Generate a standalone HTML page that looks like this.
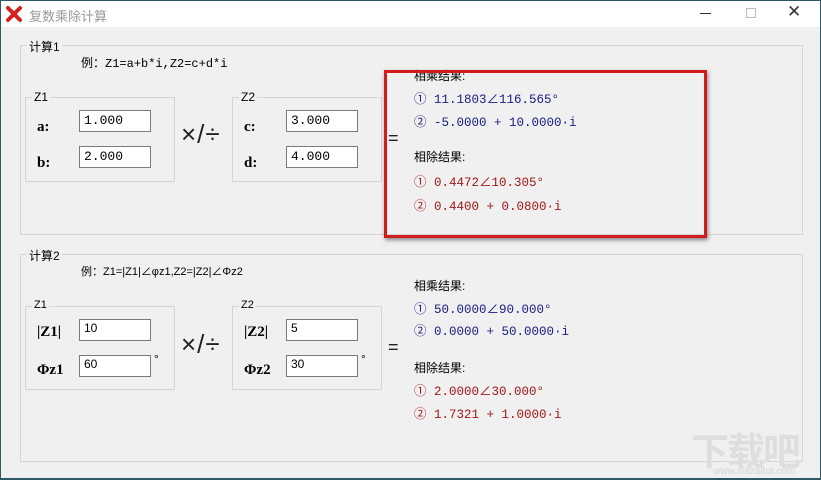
<!DOCTYPE html>
<html><head><meta charset="utf-8"><style>
*{margin:0;padding:0;box-sizing:border-box}
body{width:821px;height:480px;background:#2f5866;position:relative;overflow:hidden;font-family:"Liberation Mono","Noto Sans CJK SC",monospace;font-size:12px;color:#000}
#win{position:absolute;left:1px;top:1px;width:819px;height:477px;background:#f0f0f0}
#tb{position:absolute;left:0;top:0;width:819px;height:26px;background:#fff}
.a{position:absolute;white-space:nowrap}
.grp{position:absolute;border:1px solid #d5d5d5}
.inp{position:absolute;width:72px;height:22px;background:#fff;border:1px solid #7a7a7a;font-size:13px;padding:2px 0 0 4px;font-family:"Liberation Mono",monospace}
.inp2{font-family:"Liberation Sans",sans-serif;font-size:12px;padding-top:1px}
.lbl{font-family:"Liberation Serif","Noto Serif CJK SC",serif;font-weight:bold;font-size:15px}
.cn{font-family:"Liberation Sans","Noto Sans CJK SC",sans-serif;font-size:12px}
.bl{color:#1a2080;font-size:12.5px}
.rd{color:#a01818;font-size:12.5px}
.op{font-family:"Liberation Sans","Noto Sans CJK SC",sans-serif;font-size:26px;color:#222;letter-spacing:1px}
</style></head><body><div id="win">
<div id="tb"></div>
<svg class="a" style="left:4px;top:4px" width="18" height="18" viewBox="0 0 18 18"><path d="M3 3L15 15M15 3L3 15" stroke="#d42020" stroke-width="4" stroke-linecap="round"/></svg>
<div class="a cn" style="left:28px;top:5px;color:#999;font-size:13px">复数乘除计算</div>
<div class="a" style="left:699px;top:12px;width:11px;height:1px;background:#333"></div>
<div class="a" style="left:745px;top:7px;width:10px;height:10px;border:1px solid #bbb"></div>
<div class="a" style="left:786px;top:1px;font-family:'Liberation Sans';font-size:17px;color:#333">✕</div>

<div class="grp" style="left:19px;top:44px;width:783px;height:190px"></div>
<div class="a cn" style="left:26px;top:37px;background:#f0f0f0;padding:0 2px">计算1</div>
<div class="a cn" style="left:80px;top:53px">例：<span style="font-family:'Liberation Mono';font-size:12px">Z1=a+b*i,Z2=c+d*i</span></div>
<div class="grp" style="left:24px;top:96px;width:150px;height:85px"></div>
<div class="a cn" style="left:31px;top:89px;background:#f0f0f0;padding:0 2px">Z1</div>
<div class="a lbl" style="left:36px;top:118px">a:</div>
<div class="a lbl" style="left:36px;top:154px">b:</div>
<div class="inp" style="left:78px;top:109px">1.000</div>
<div class="inp" style="left:78px;top:145px">2.000</div>
<div class="a op" style="left:180px;top:118px">×/÷</div>
<div class="grp" style="left:231px;top:96px;width:150px;height:85px"></div>
<div class="a cn" style="left:238px;top:89px;background:#f0f0f0;padding:0 2px">Z2</div>
<div class="a lbl" style="left:243px;top:118px">c:</div>
<div class="a lbl" style="left:243px;top:154px">d:</div>
<div class="inp" style="left:285px;top:109px">3.000</div>
<div class="inp" style="left:285px;top:145px">4.000</div>
<div class="a op" style="left:387px;top:127px;font-size:18px">=</div>
<div class="a cn" style="left:413px;top:66px">相乘结果:</div>
<div class="a bl" style="left:413px;top:87px">① 11.1803∠116.565°</div>
<div class="a bl" style="left:413px;top:110px">② -5.0000 + 10.0000·i</div>
<div class="a cn" style="left:413px;top:147px">相除结果:</div>
<div class="a rd" style="left:413px;top:170px">① 0.4472∠10.305°</div>
<div class="a rd" style="left:413px;top:194px">② 0.4400 + 0.0800·i</div>
<div class="a" style="left:383px;top:69px;width:323px;height:168px;border:3px solid #d21c1c;box-shadow:1px 2px 4px rgba(0,0,0,.45)"></div>

<div class="grp" style="left:19px;top:253px;width:783px;height:208px"></div>
<div class="a cn" style="left:26px;top:246px;background:#f0f0f0;padding:0 2px">计算2</div>
<div class="a cn" style="left:80px;top:262px;font-size:11px">例：Z1=|Z1|∠φz1,Z2=|Z2|∠Φz2</div>
<div class="grp" style="left:24px;top:305px;width:150px;height:84px"></div>
<div class="a cn" style="left:31px;top:298px;background:#f0f0f0;padding:0 2px;font-size:11px">Z1</div>
<div class="a lbl" style="left:36px;top:323px">|Z1|</div>
<div class="a lbl" style="left:36px;top:361px">Φz1</div>
<div class="inp inp2" style="left:78px;top:318px">10</div>
<div class="inp inp2" style="left:78px;top:354px">60</div>
<div class="a cn" style="left:153px;top:351px">°</div>
<div class="a op" style="left:180px;top:328px">×/÷</div>
<div class="grp" style="left:231px;top:305px;width:150px;height:84px"></div>
<div class="a cn" style="left:238px;top:298px;background:#f0f0f0;padding:0 2px;font-size:11px">Z2</div>
<div class="a lbl" style="left:243px;top:323px">|Z2|</div>
<div class="a lbl" style="left:243px;top:361px">Φz2</div>
<div class="inp inp2" style="left:285px;top:318px">5</div>
<div class="inp inp2" style="left:285px;top:354px">30</div>
<div class="a cn" style="left:360px;top:351px">°</div>
<div class="a op" style="left:387px;top:336px;font-size:18px">=</div>
<div class="a cn" style="left:413px;top:276px">相乘结果:</div>
<div class="a bl" style="left:413px;top:297px">① 50.0000∠90.000°</div>
<div class="a bl" style="left:413px;top:319px">② 0.0000 + 50.0000·i</div>
<div class="a cn" style="left:413px;top:358px">相除结果:</div>
<div class="a rd" style="left:413px;top:379px">① 2.0000∠30.000°</div>
<div class="a rd" style="left:413px;top:402px">② 1.7321 + 1.0000·i</div>

<div class="a cn" style="left:690px;top:420px;font-size:38px;color:#dedede;font-weight:bold;letter-spacing:-2px">下载吧</div>
<div class="a" style="left:712px;top:465px;font-family:'Liberation Sans';font-size:10px;color:#d4d4d4">www.xiazaiba.com</div>
</div></body></html>
